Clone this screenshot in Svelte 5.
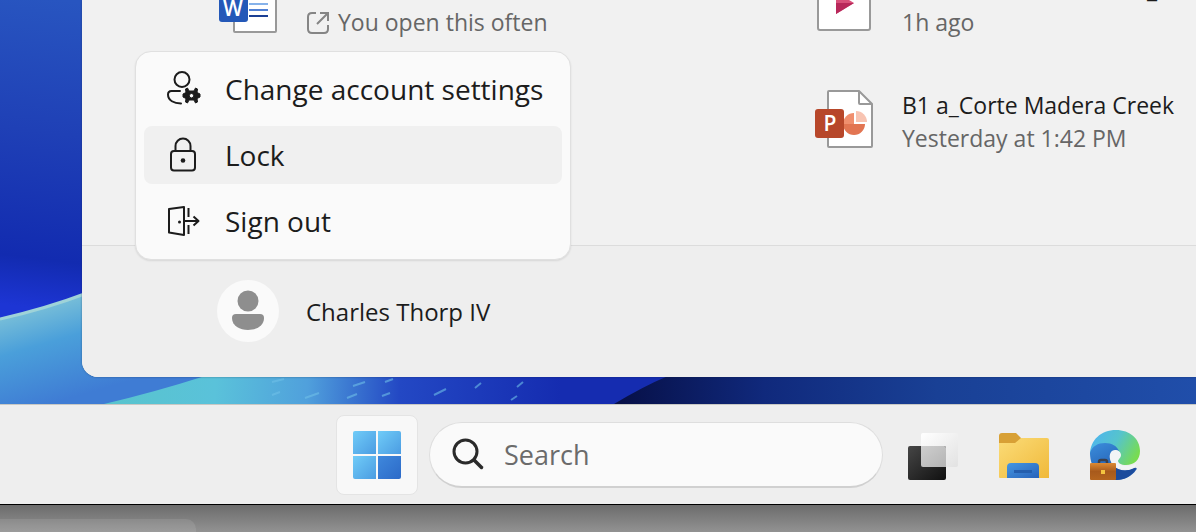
<script>
  const menu = [
    { id: 'settings', label: 'Change account settings' },
    { id: 'lock', label: 'Lock', active: true },
    { id: 'signout', label: 'Sign out' },
  ];
</script>

{#snippet menuIcon(id)}
  <svg class="menu-icon" viewBox="0 0 36 36" aria-hidden="true">
    {#if id === 'settings'}
      <g fill="none" stroke="#1c1c1c" stroke-width="2" stroke-linecap="round">
        <circle cx="17" cy="8.500" r="7.500" />
        <path d="M15 20H6.500q-3.500 0-3.500 3.500c0 6 6 9 13 9" />
      </g>
      <path
        fill="#1c1c1c"
        fill-rule="evenodd"
        stroke="#1c1c1c"
        stroke-linejoin="round"
        d="M22.500 17l1.500 3h5l1.500-3 2 1-.5 3.500 3 1.500v3l-3 1.500.5 3.500-2 1-1.500-3h-5l-1.500 3-2-1 .5-3.500-3-1.500v-3l3-1.500-.5-3.500zM26.500 22.500a2.200 2.200 0 1 0 0 4.400 2.200 2.200 0 0 0 0-4.400z"
      />
    {:else if id === 'lock'}
      <g fill="none" stroke="#1c1c1c" stroke-width="2">
        <rect x="6" y="14" width="24" height="19.500" rx="3" />
        <path d="M10.500 14V9a7.500 7.500 0 0 1 15 0V14" />
      </g>
      <circle cx="18" cy="23.500" r="2.300" fill="#1c1c1c" />
    {:else}
      <g fill="none" stroke="#1c1c1c" stroke-width="2" stroke-linejoin="round">
        <path d="M4 6 19 4v28L4 29.500z" />
        <path d="M19 18h14M28.500 13.500l5 4.500-5 4.500M23.500 5v9M23.500 22v9" />
      </g>
      <circle cx="14.500" cy="19" r="1.500" fill="#1c1c1c" />
    {/if}
  </svg>
{/snippet}

<div class="screen">
  <div class="wallpaper-area">
    <svg class="wallpaper" viewBox="0 0 1196 404" preserveAspectRatio="xMinYMax slice" aria-hidden="true">
      <defs>
        <linearGradient id="sky" gradientUnits="userSpaceOnUse" x1="60" y1="0" x2="20" y2="330">
          <stop offset="0" stop-color="#2855c0" />
          <stop offset="0.4" stop-color="#1f40b6" />
          <stop offset="0.78" stop-color="#122bb0" />
          <stop offset="0.93" stop-color="#1d35d4" />
        </linearGradient>
        <linearGradient id="petal" gradientUnits="userSpaceOnUse" x1="20" y1="300" x2="50" y2="404">
          <stop offset="0" stop-color="#86c8d8" />
          <stop offset="0.45" stop-color="#4a9fda" />
          <stop offset="1" stop-color="#3f7cd4" />
        </linearGradient>
        <linearGradient id="wave" gradientUnits="userSpaceOnUse" x1="100" y1="390" x2="560" y2="410">
          <stop offset="0" stop-color="#58c4cc" />
          <stop offset="0.25" stop-color="#5ac2da" />
          <stop offset="0.45" stop-color="#50a0dc" />
          <stop offset="0.65" stop-color="#2348c4" />
          <stop offset="1" stop-color="#152cb0" />
        </linearGradient>
        <linearGradient id="deep" gradientUnits="userSpaceOnUse" x1="620" y1="0" x2="1196" y2="0">
          <stop offset="0" stop-color="#071048" />
          <stop offset="0.25" stop-color="#10297c" />
          <stop offset="0.55" stop-color="#194095" />
          <stop offset="1" stop-color="#204eaa" />
        </linearGradient>
      </defs>
      <rect width="1196" height="404" fill="url(#sky)" />
      <path d="M0 319Q45 309 90 292L260 350V404H0z" fill="url(#petal)" />
      <path d="M0 319Q45 309 90 292" fill="none" stroke="#9fd3d8" stroke-width="3" />
      <path d="M104 404Q155 392 205 376H690L616 404z" fill="url(#wave)" />
      <path d="M614 404Q644 386 668 376H1196V404z" fill="url(#deep)" />
      <g stroke="#6fc0e8" stroke-width="2" opacity="0.6">
        <path d="M272 382l12-3M305 398l14-5M272 395l8-3M353 386l12-4M385 382l8-3M347 398l10-4M434 395l12-6M475 388l6-5M517 387l6-5M511 400l6-4M382 396l8-3" />
      </g>
    </svg>

    <section class="start-panel" aria-label="Start">
      <div class="recommended">
        <article class="doc">
          <svg class="doc-icon" viewBox="0 0 60 60" aria-hidden="true">
            <path d="M16 4h30l12 12v42q0 1-1 1H17q-1 0-1-1z" fill="#fff" stroke="#999" stroke-width="2" stroke-linejoin="round" />
            <g stroke-width="2"><path d="M31 24h19" stroke="#a8dcf6" /><path d="M31 31h19" stroke="#86b2ea" /><path d="M31 37h19" stroke="#5080d4" /><path d="M31 43h19" stroke="#1b3f94" /></g>
            <rect x="1" y="20" width="29" height="29" rx="3" fill="#2458b8" />
            <text x="15" y="43" class="badge-letter">W</text>
          </svg>
          <div class="doc-text">
            <span class="doc-title">&nbsp;</span>
            <span class="doc-note">
              <svg class="open-icon" viewBox="0 0 24 24" aria-hidden="true">
                <path d="M10 2H6Q2 2 2 6v12q0 4 4 4h12q4 0 4-4v-4M14 2h8v8M22 2 11 13" fill="none" stroke="#858585" stroke-width="2" />
              </svg>
              You open this often
            </span>
          </div>
        </article>
        <article class="doc">
          <svg class="doc-icon" viewBox="0 0 60 60" aria-hidden="true">
            <rect x="4" y="4" width="52" height="53" rx="2" fill="#fff" stroke="#999" stroke-width="2" />
            <path d="M22 19v22l18-11z" fill="#d8507a" /><path d="M22 30h18L22 41z" fill="#b8285a" />
          </svg>
          <div class="doc-text">
            <span class="doc-title clipped">_</span>
            <span class="doc-note">1h ago</span>
          </div>
        </article>
        <article class="doc second">
          <svg class="doc-icon" viewBox="0 0 60 60" aria-hidden="true">
            <path d="M15 2h30l13 13v42q0 1-1 1H15q-1 0-1-1V3q0-1 1-1z" fill="#fff" stroke="#999" stroke-width="2" />
            <path d="M45 2v12q0 1 1 1h12" fill="none" stroke="#999" stroke-width="2" />
            <path d="M40 24v11h11a11 11 0 0 1-22 0z" fill="#e27552" />
            <path d="M40 24v11H29a11 11 0 0 1 11-11z" fill="#f08f6e" />
            <path d="M42 22a11 11 0 0 1 11 11H42z" fill="#f8c4b2" />
            <rect x="1" y="20" width="29" height="29" rx="3" fill="#b7472a" />
            <text x="16" y="42" class="badge-letter">P</text>
          </svg>
          <div class="doc-text">
            <span class="doc-title">B1 a_Corte Madera Creek</span>
            <span class="doc-note">Yesterday at 1:42 PM</span>
          </div>
        </article>
      </div>

      <footer class="account-bar">
        <button class="account" type="button" aria-haspopup="menu" aria-expanded="true">
          <svg class="avatar" viewBox="0 0 62 62" aria-hidden="true">
            <circle cx="31" cy="31" r="31" fill="#fafafa" />
            <circle cx="31" cy="21" r="10.500" fill="#8e8e8e" />
            <path d="M19 34h24q4 0 4 4c0 8-8 12-16 12s-16-4-16-12q0-4 4-4z" fill="#8e8e8e" />
          </svg>
          Charles Thorp IV
        </button>
        <div class="menu" role="menu">
          {#each menu as item}
            <button class="menu-item" class:active={item.active} type="button" role="menuitem">
              {@render menuIcon(item.id)}
              {item.label}
            </button>
          {/each}
        </div>
      </footer>
    </section>
  </div>

  <nav class="taskbar" aria-label="Taskbar">
    <button class="start-button" type="button" aria-label="Start">
      <svg viewBox="0 0 48 48" aria-hidden="true">
        <defs>
          <linearGradient id="pane" x1="0" y1="0" x2="1" y2="1"><stop offset="0" stop-color="#70ccf8" /><stop offset="1" stop-color="#4b9ce2" /></linearGradient>
          <linearGradient id="paneDark" x1="0" y1="0" x2="1" y2="1"><stop offset="0" stop-color="#3f88dc" /><stop offset="1" stop-color="#2c6ac8" /></linearGradient>
        </defs>
        <path d="M2 0h21v23H0V2q0-2 2-2z" fill="url(#pane)" />
        <path d="M25 0h21q2 0 2 2v21H25z" fill="url(#pane)" />
        <path d="M0 25h23v23H2q-2 0-2-2z" fill="url(#pane)" />
        <path d="M25 25h23v21q0 2-2 2H25z" fill="url(#paneDark)" />
      </svg>
    </button>
    <label class="search">
      <svg viewBox="0 0 32 32" aria-hidden="true">
        <circle cx="13.500" cy="13.500" r="11.500" fill="none" stroke="#2a2a2a" stroke-width="3" />
        <path d="M22 22l7.500 7.500" stroke="#2a2a2a" stroke-width="3.500" stroke-linecap="round" />
      </svg>
      <input type="search" placeholder="Search" aria-label="Search" />
    </label>
    <div class="apps">
      <button class="app" type="button" aria-label="Task view">
        <svg viewBox="0 0 52 52" aria-hidden="true">
          <defs>
            <linearGradient id="tvDark" x1="0" y1="0" x2="1" y2="1"><stop offset="0" stop-color="#464646" /><stop offset="1" stop-color="#101010" /></linearGradient>
            <linearGradient id="tvLight" x1="0" y1="0" x2="1" y2="1"><stop offset="0" stop-color="#fff" /><stop offset="1" stop-color="#e2e2e2" /></linearGradient>
            <linearGradient id="tvMix" x1="0" y1="0" x2="1" y2="1"><stop offset="0" stop-color="#cecece" /><stop offset="1" stop-color="#b4b4b4" /></linearGradient>
          </defs>
          <rect x="14" y="4" width="37" height="34" rx="2" fill="url(#tvLight)" />
          <rect x="1" y="17" width="38" height="34" rx="2" fill="url(#tvDark)" />
          <path d="M14 17h23q2 0 2 2v19H16q-2 0-2-2z" fill="url(#tvMix)" />
        </svg>
      </button>
      <button class="app" type="button" aria-label="File Explorer">
        <svg viewBox="0 0 52 52" aria-hidden="true">
          <defs>
            <linearGradient id="folder" x1="0" y1="0" x2="1" y2="1"><stop offset="0" stop-color="#fbdc78" /><stop offset="1" stop-color="#f0b93a" /></linearGradient>
            <linearGradient id="pocket" x1="0" y1="0" x2="1" y2="1"><stop offset="0" stop-color="#4597e2" /><stop offset="1" stop-color="#2862ba" /></linearGradient>
          </defs>
          <path d="M1 16V7q0-3 3-3h14l5 5v8z" fill="#d8a035" />
          <path d="M1 14h16l6-5h26q2 0 2 2v38H2q-1 0-1-1z" fill="url(#folder)" />
          <path d="M9 49V38q0-4 4-4h24q4 0 4 4v11z" fill="url(#pocket)" />
          <path d="M16 41h18v3H16z" fill="#245eae" />
        </svg>
      </button>
      <button class="app" type="button" aria-label="Microsoft Edge">
        <svg viewBox="0 0 52 52" aria-hidden="true">
          <defs>
            <linearGradient id="edgeTop" x1="0" y1="0.2" x2="1" y2="0.6"><stop offset="0" stop-color="#4db4f0" /><stop offset="0.5" stop-color="#56c4cc" /><stop offset="1" stop-color="#78dc50" /></linearGradient>
            <linearGradient id="edgeMid" x1="0" y1="0" x2="0.6" y2="1"><stop offset="0" stop-color="#3c8edc" /><stop offset="1" stop-color="#1c52a8" /></linearGradient>
            <linearGradient id="bag" x1="0" y1="0" x2="0" y2="1"><stop offset="0" stop-color="#dc8a34" /><stop offset="0.5" stop-color="#a85a1c" /><stop offset="1" stop-color="#b5651f" /></linearGradient>
          </defs>
          <path d="M1 26C1 11 12 1 27 1c14 0 24 9 24 21 0 9-6 14-14 14-5 0-8-2-8-4s2-3 2-6-3-6-6-9z" fill="url(#edgeTop)" />
          <path d="M1 24C3 17 9 14 16 14c7 0 12 3 14 8-5-1-9 2-9 7 0 8 9 14 19 12 3 0 6-2 7-2 1 0 1 1 0 2C43 47 36 51 27 51 12 51 1 40 1 24z" fill="url(#edgeMid)" />
          <path d="M21 29c0 9 10 14 19 12 4-1 6-3 7-2-4 8-12 12-20 12z" fill="#1c4b9c" />
          <path d="M26 21c-4 0-6 4-5 9 2 8 12 12 21 10 3-1 5-3 5-5-3 1-6 2-10 2-5 0-8-3-8-5s3-3 3-6-3-5-6-5z" fill="#f2f4f6" />
          <path d="M10 35v-2q0-2 2-2h4q2 0 2 2v2" fill="none" stroke="#3a3f4c" stroke-width="2.500" />
          <rect x="1" y="34" width="26" height="17" rx="1" fill="url(#bag)" />
          <rect x="12" y="41" width="4" height="4" fill="#f4c440" />
        </svg>
      </button>
    </div>
  </nav>

  <div class="below"><div class="below-tab"></div></div>
</div>

<style>
  :global(body) {
    margin: 0;
    background: #eee;
  }
  .screen {
    display: flex;
    flex-direction: column;
    height: 100vh;
    overflow: hidden;
    font-family: 'Open Sans', 'Noto Sans', sans-serif;
    color: #1c1c1c;
  }
  button {
    border: 0;
    margin: 0;
    background: none;
    color: inherit;
    font: inherit;
  }
  svg {
    display: block;
    flex: none;
  }
  .wallpaper-area {
    position: relative;
    flex: 1;
    display: flex;
    min-height: 0;
    padding: 0 0 27px 82px;
  }
  .wallpaper {
    position: absolute;
    inset: 0;
    width: 100%;
    height: 100%;
  }
  .start-panel {
    position: relative;
    flex: 1;
    display: flex;
    flex-direction: column;
    background: #f1f1f1;
    border-radius: 0 0 0 16px;
    box-shadow: 0 0 2px #10204080;
  }
  .recommended {
    flex: 1;
    display: grid;
    grid-template-columns: 596px 1fr;
    align-content: end;
    row-gap: 50px;
    min-height: 0;
    overflow: hidden;
    padding: 0 0 90px 136px;
  }
  .doc {
    display: flex;
    align-items: flex-start;
    gap: 28px;
    min-width: 0;
  }
  .doc.second {
    grid-column: 2;
  }
  .doc-icon {
    width: 60px;
    height: 60px;
  }
  .badge-letter {
    fill: #fff;
    font-size: 21px;
    font-weight: 600;
    text-anchor: middle;
  }
  .doc-text {
    display: flex;
    flex-direction: column;
    font-size: 23px;
    line-height: 33px;
    white-space: nowrap;
  }
  .doc-title.clipped {
    padding-left: 245px;
  }
  .doc-note {
    display: flex;
    align-items: center;
    gap: 8px;
    color: #666;
  }
  .open-icon {
    width: 24px;
    height: 24px;
  }
  .account-bar {
    position: relative;
    display: flex;
    padding: 34px 0 35px 135px;
    border-top: 1px solid #dcdcdc;
    border-radius: 0 0 0 16px;
    background: #eee;
  }
  .account {
    display: flex;
    align-items: center;
    gap: 27px;
    padding: 0;
    font-size: 24px;
  }
  .avatar {
    width: 62px;
    height: 62px;
  }
  .menu {
    position: absolute;
    left: 53px;
    bottom: 117px;
    display: flex;
    flex-direction: column;
    gap: 8px;
    width: 418px;
    padding: 8px 8px 9px;
    border: 1px solid #e0e0e0;
    border-radius: 16px;
    background: #fafafa;
    box-shadow: 0 1px 2px #0000001a;
  }
  .menu-item {
    display: flex;
    align-items: center;
    gap: 24px;
    height: 58px;
    padding: 0 21px;
    border-radius: 8px;
    font-size: 28px;
    white-space: nowrap;
  }
  .menu-item.active {
    background: #f0f0f0;
  }
  .menu-icon {
    width: 36px;
    height: 36px;
  }
  .taskbar {
    display: flex;
    align-items: center;
    height: 99px;
    padding-left: 336px;
    border-top: 1px solid #c8c8c4;
    border-bottom: 1px solid #000;
    background: #eee;
  }
  .start-button {
    display: grid;
    place-items: center;
    width: 82px;
    height: 80px;
    padding: 0;
    border: 1px solid #e4e4e4;
    border-radius: 8px;
    background: #f8f8f8;
  }
  .start-button svg {
    width: 48px;
    height: 48px;
  }
  .search {
    display: flex;
    align-items: center;
    gap: 20px;
    box-sizing: border-box;
    width: 454px;
    height: 66px;
    margin-left: 11px;
    padding: 0 22px;
    border: 1px solid #dedede;
    border-bottom: 2px solid #d0d0d0;
    border-radius: 33px;
    background: #fafafa;
  }
  .search svg {
    width: 32px;
    height: 32px;
  }
  .search input {
    flex: 1;
    min-width: 0;
    padding: 0;
    border: 0;
    outline: 0;
    background: none;
    color: #1c1c1c;
    font: inherit;
    font-size: 27px;
  }
  .search input::placeholder {
    color: #6b6b6b;
    opacity: 1;
  }
  .apps {
    display: flex;
    gap: 39px;
    margin-left: 24px;
  }
  .app {
    padding: 0;
  }
  .app svg {
    width: 52px;
    height: 52px;
  }
  .below {
    display: flex;
    align-items: flex-end;
    height: 27px;
    background: linear-gradient(#6c6c6c, #929292);
  }
  .below-tab {
    width: 196px;
    height: 13px;
    border-radius: 0 10px 0 0;
    background: #ffffff18;
  }
</style>
